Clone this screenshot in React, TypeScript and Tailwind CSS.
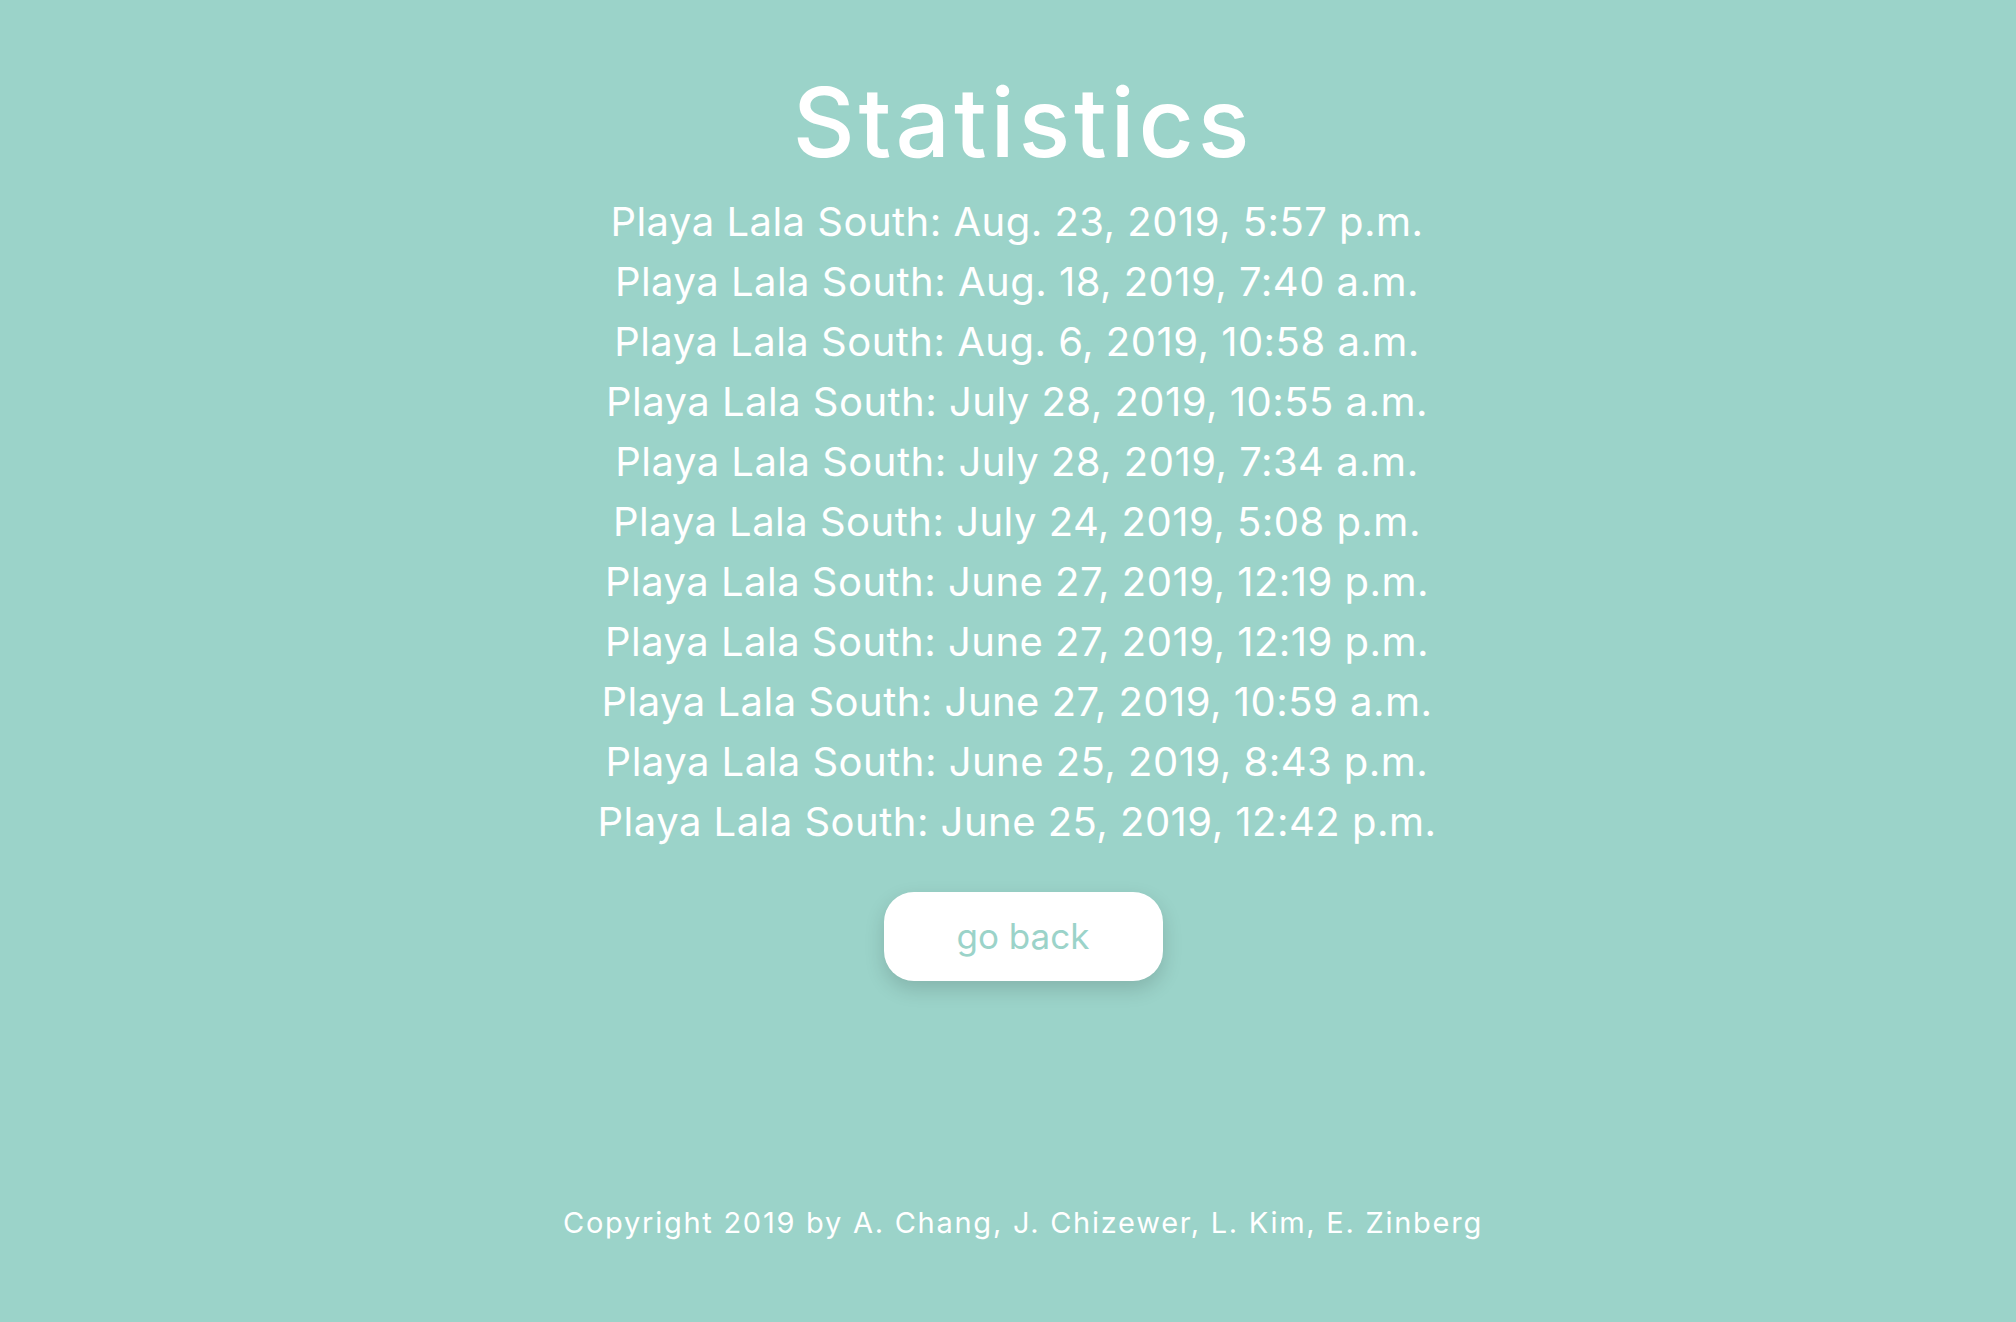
const items = [
  "Playa Lala South: Aug. 23, 2019, 5:57 p.m.",
  "Playa Lala South: Aug. 18, 2019, 7:40 a.m.",
  "Playa Lala South: Aug. 6, 2019, 10:58 a.m.",
  "Playa Lala South: July 28, 2019, 10:55 a.m.",
  "Playa Lala South: July 28, 2019, 7:34 a.m.",
  "Playa Lala South: July 24, 2019, 5:08 p.m.",
  "Playa Lala South: June 27, 2019, 12:19 p.m.",
  "Playa Lala South: June 27, 2019, 12:19 p.m.",
  "Playa Lala South: June 27, 2019, 10:59 a.m.",
  "Playa Lala South: June 25, 2019, 8:43 p.m.",
  "Playa Lala South: June 25, 2019, 12:42 p.m.",
];

export default function App() {
  return (
    <div
      className="min-h-[1322px] w-full bg-[#9bd3c9] text-white flex flex-col items-center pl-[30px]"
      style={{ fontFamily: "Inter, 'Noto Sans', sans-serif" }}
    >
      <h1 className="mt-[74px] text-[96px] leading-none font-medium tracking-[0.04em]">Statistics</h1>
      <ul className="mt-[22px] flex flex-col items-center pr-[12px]">
        {items.map((t, i) => (
          <li key={i} className="text-[40px] leading-[60px] tracking-[0.012em]">
            {t}
          </li>
        ))}
      </ul>
      <button className="mt-[40px] w-[279px] h-[89px] rounded-[30px] bg-white text-[#9bd3c9] text-[35px] shadow-[0_8px_20px_rgba(0,0,0,0.15)]">
        go back
      </button>
      <footer className="mt-[220px] text-[29px] leading-[44px] tracking-[0.06em]">
        Copyright 2019 by A. Chang, J. Chizewer, L. Kim, E. Zinberg
      </footer>
    </div>
  );
}
